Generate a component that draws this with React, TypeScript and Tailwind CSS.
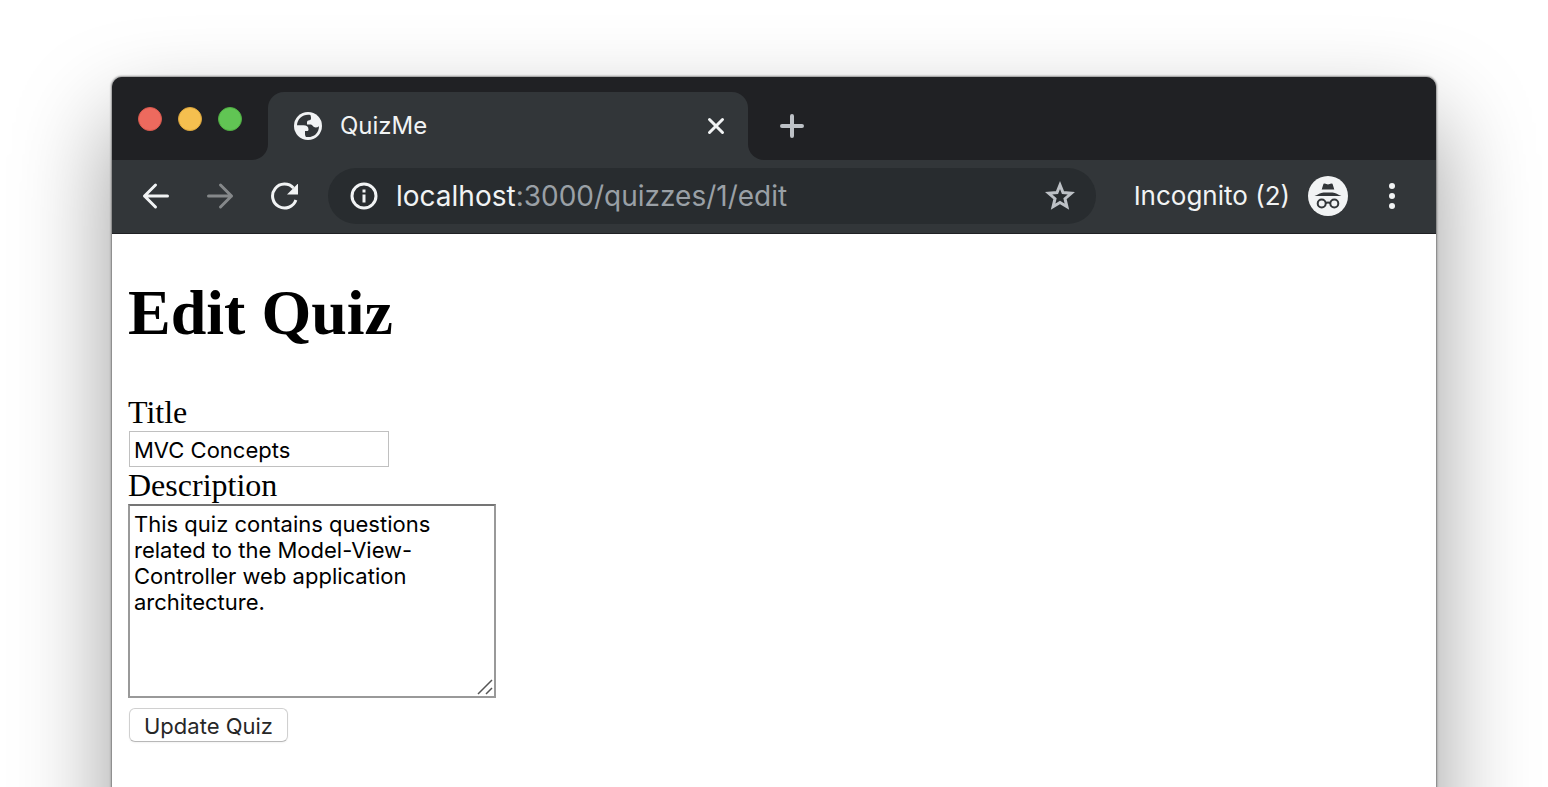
import React from "react";

const trafficLights = [
  { label: "Close window", color: "bg-[#ed6a5e] border-[#d8584d]" },
  { label: "Minimize window", color: "bg-[#f5bf4f] border-[#dba53c]" },
  { label: "Zoom window", color: "bg-[#61c554] border-[#4fae42]" },
];

function TabStrip() {
  return (
    <div className="flex h-[83px] bg-[#323639]">
      <div className="flex w-[156px] shrink-0 items-start gap-4 rounded-br-2xl bg-[#202124] pt-[30px] pl-[26px]">
        {trafficLights.map((l) => (
          <button key={l.label} type="button" aria-label={l.label} className={`size-6 rounded-full border ${l.color}`} />
        ))}
      </div>
      <div className="w-[480px] bg-[#202124] pt-[15px]">
        <div className="flex h-full items-center rounded-t-2xl bg-[#323639] pr-[22px] pl-[26px]">
          <svg viewBox="0 0 28 28" className="size-7 shrink-0" aria-hidden="true">
            <circle cx="14" cy="14" r="14" fill="#f1f3f4" />
            <path
              fill="#323639"
              d="M16.500 2.900C9.500 1.500 3.200 6.500 3 13.300h6.500c3 0 5 1.400 5 4.200 0 1-.7 1.500-1.500 1.500h-2v3c0 1 .3 2.200 1 2.900C19 26 25 21.500 25 14.200c-1.500 1.300-3.500 1.600-5 .9-1.500-.7-1.600-2.300-3-2.500h-4V10.500c0-1.500 1-2.200 2.300-2.300 1.500-.1 1.700-1 1.700-2.300 0-1.400-.5-2 -.5-3z"
            />
          </svg>
          <span className="ml-[18px] flex-1 text-2xl leading-8 text-[#f1f3f4]">QuizMe</span>
          <button type="button" aria-label="Close tab" className="text-[#f1f3f4]">
            <svg viewBox="0 0 20 20" className="size-5" fill="none" stroke="currentColor" strokeWidth="3" strokeLinecap="round">
              <path d="M3.500 3.500l13 13M16.500 3.500l-13 13" />
            </svg>
          </button>
        </div>
      </div>
      <div className="flex flex-1 items-start rounded-bl-2xl bg-[#202124] pt-[37px] pl-8">
        <button type="button" aria-label="New tab" className="text-[#bdc1c6]">
          <svg viewBox="0 0 24 24" className="size-6" fill="none" stroke="currentColor" strokeWidth="4" strokeLinecap="round">
            <path d="M2 12h20M12 2v20" />
          </svg>
        </button>
      </div>
    </div>
  );
}

function Toolbar() {
  return (
    <div className="flex h-[74px] items-center border-b border-[#202124] bg-[#323639] pb-px pl-[30px] text-[#f1f3f4]">
      <button type="button" aria-label="Back">
        <svg viewBox="0 0 28 28" className="size-7" fill="none" stroke="currentColor" strokeWidth="3" strokeLinecap="round" strokeLinejoin="round">
          <path d="M25.500 14H2.500M13.500 3l-11 11 11 11" />
        </svg>
      </button>
      <button type="button" aria-label="Forward" className="ml-9 text-[#85888a]">
        <svg viewBox="0 0 28 28" className="size-7" fill="none" stroke="currentColor" strokeWidth="3" strokeLinecap="round" strokeLinejoin="round">
          <path d="M2.500 14h23M14.500 3l11 11-11 11" />
        </svg>
      </button>
      <button type="button" aria-label="Reload" className="ml-9">
        <svg viewBox="0 0 28 28" className="size-7" fill="none" stroke="currentColor" strokeWidth="3">
          <path d="M25.900 18A12 12 0 1 1 23.500 6" />
          <path d="M28.500 1v11.500H17z" fill="currentColor" stroke="none" />
        </svg>
      </button>
      <div className="ml-[30px] flex h-14 flex-1 items-center rounded-full bg-[#282c2f] pr-5 pl-[22px]">
        <svg viewBox="0 0 28 28" className="size-7 shrink-0" fill="none" stroke="currentColor" strokeWidth="3" aria-hidden="true">
          <circle cx="14" cy="14" r="12" />
          <path d="M14 12.500v8M14 7.500v3" />
        </svg>
        <a href="#edit" className="ml-[18px] flex-1 text-[28px] leading-8 text-[#9aa0a6]">
          <span className="text-[#f1f3f4]">localhost</span>:3000/quizzes/1/edit
        </a>
        <button type="button" aria-label="Bookmark this page" className="text-[#bdc1c6]">
          <svg viewBox="0 0 32 32" className="size-8" fill="none" stroke="currentColor" strokeWidth="3">
            <path d="M16 5l3 7.600 8.300.7-6.300 5.400 1.900 8-6.900-4.200-6.900 4.200 1.900-8-6.300-5.400 8.300-.7z" />
          </svg>
        </button>
      </div>
      <span className="ml-[38px] text-[26px] leading-8">Incognito (2)</span>
      <svg viewBox="0 0 40 40" className="ml-[18px] size-10 shrink-0" aria-hidden="true">
        <circle cx="20" cy="20" r="20" fill="#f1f3f4" />
        <path fill="#323639" d="M15.500 7.800l1.300-.3 3.200 1 3.200-1 1.300.3 1.800 5.700H13.700zM6.500 20c3.500-1 6-3.400 9-3.400h9c3 0 5.500 2.400 9 3.400z" />
        <g fill="none" stroke="#323639" strokeWidth="2">
          <circle cx="13.700" cy="27.500" r="4" />
          <circle cx="26.300" cy="27.500" r="4" />
          <path d="M17.700 27q2.300-1 4.600 0" />
        </g>
      </svg>
      <button type="button" aria-label="Menu" className="mr-[28px] ml-7">
        <svg viewBox="0 0 32 32" className="size-8" fill="currentColor">
          <circle cx="16" cy="6" r="3" />
          <circle cx="16" cy="16" r="3" />
          <circle cx="16" cy="26" r="3" />
        </svg>
      </button>
    </div>
  );
}

function EditQuizForm() {
  return (
    <main className="bg-white px-4 pt-[42px] font-['Liberation_Serif',serif] text-[32px] leading-[37px] text-black">
      <h1 className="text-[64px] leading-[74px] font-bold">Edit Quiz</h1>
      <form className="mt-11 flex flex-col items-start" onSubmit={(e) => e.preventDefault()}>
        <label htmlFor="quiz-title">Title</label>
        <input
          id="quiz-title"
          type="text"
          defaultValue="MVC Concepts"
          className="ml-px h-9 w-[260px] border border-[#c0c0c0] bg-white px-1 pt-0.5 font-[Inter,sans-serif] text-[22px] leading-[26px]"
        />
        <label htmlFor="quiz-description">Description</label>
        <div className="relative flex">
          <textarea
            id="quiz-description"
            defaultValue="This quiz contains questions related to the Model-View-Controller web application architecture."
            className="h-[194px] w-[368px] resize border-2 border-[#999] border-t-[#757575] bg-white px-1 py-[5px] font-[Inter,sans-serif] text-[22px] leading-[26px] [&::-webkit-resizer]:bg-transparent"
          />
          <svg
            viewBox="0 0 16 16"
            className="pointer-events-none absolute right-[3px] bottom-[3px] size-4"
            fill="none"
            stroke="#555"
            strokeWidth="1.500"
            aria-hidden="true"
          >
            <path d="M1 15L15 1M9 15l6-6" />
          </svg>
        </div>
        <button
          type="submit"
          className="mt-[10px] ml-px h-[34px] rounded-md border border-[#d0d0d0] border-b-[#b8b8b8] bg-white px-[14px] pt-0.5 font-[Inter,sans-serif] text-[22px] leading-[26px] text-[#272727] shadow-xs"
        >
          Update Quiz
        </button>
      </form>
    </main>
  );
}

export default function App() {
  return (
    <div className="h-screen overflow-hidden bg-white px-28 pt-[77px] font-[Inter,sans-serif]">
      <div className="min-h-screen overflow-hidden rounded-t-[10px] bg-white shadow-[0_0_2px_1px_rgba(0,0,0,0.4),0_44px_96px_rgba(0,0,0,0.4)]">
        <TabStrip />
        <Toolbar />
        <EditQuizForm />
      </div>
    </div>
  );
}
